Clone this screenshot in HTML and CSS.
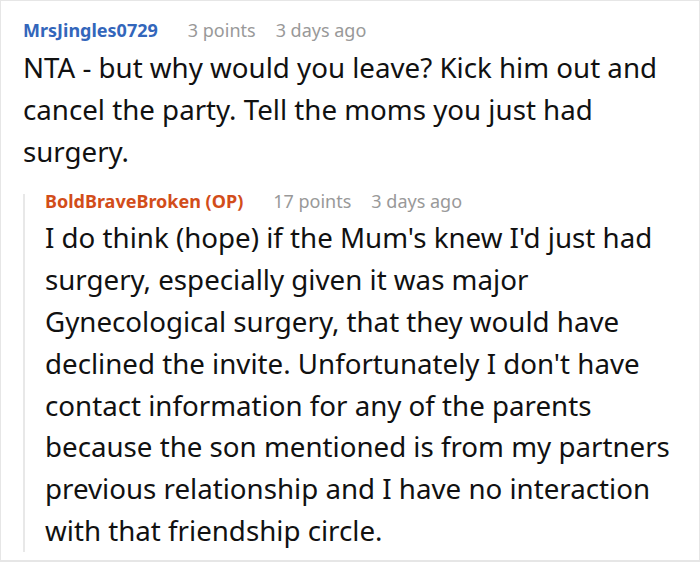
FILE: index.html
```html
<!DOCTYPE html>
<html>
<head>
<meta charset="utf-8">
<link rel="stylesheet" href="styles.css">
</head>
<body>
<div class="frame">
  <div class="comment">
    <div class="meta">
      <span class="author">MrsJingles0729</span>
      <span class="info">3 points</span>
      <span class="info">3 days ago</span>
    </div>
    <p class="body">NTA - but why would you leave? Kick him out and cancel the party. Tell the moms you just had surgery.</p>
    <div class="reply">
      <div class="meta meta-tight">
        <span class="author op">BoldBraveBroken (OP)</span>
        <span class="info">17 points</span>
        <span class="info">3 days ago</span>
      </div>
      <p class="body body-reply">I do think (hope) if the Mum's knew I'd just had surgery, especially given it was major Gynecological surgery, that they would have declined the invite. Unfortunately I don't have contact information for any of the parents because the son mentioned is from my partners previous relationship and I have no interaction with that friendship circle.</p>
    </div>
  </div>
</div>
</body>
</html>
```

FILE: styles.css
```css
html, body {
  margin: 0;
  padding: 0;
  background: #ffffff;
}
.frame {
  box-sizing: border-box;
  width: 700px;
  height: 562px;
  border: 1px solid #e6e6e6;
  border-bottom-width: 2px;
  overflow: hidden;
  font-family: "Noto Sans", "Open Sans", sans-serif;
}
.comment {
  padding: 16px 14px 0 22px;
}
.meta {
  display: flex;
  gap: 20px;
  font-size: 18px;
  line-height: 26px;
  white-space: nowrap;
}
.meta-tight {
  line-height: 14px;
}
.author {
  color: #3366bb;
  font-weight: 700;
  margin-right: 10px;
}
.author.op {
  color: #d24d1a;
}
.info {
  color: #999999;
}
.body {
  margin: 0;
  font-size: 27.7px;
  line-height: 41.8px;
  color: #111111;
  padding-top: 4px;
}
.body-reply {
  padding-top: 9px;
}
.reply {
  margin-top: 22px;
  border-left: 2px solid #e8e8e8;
  padding-left: 20px;
}
```
